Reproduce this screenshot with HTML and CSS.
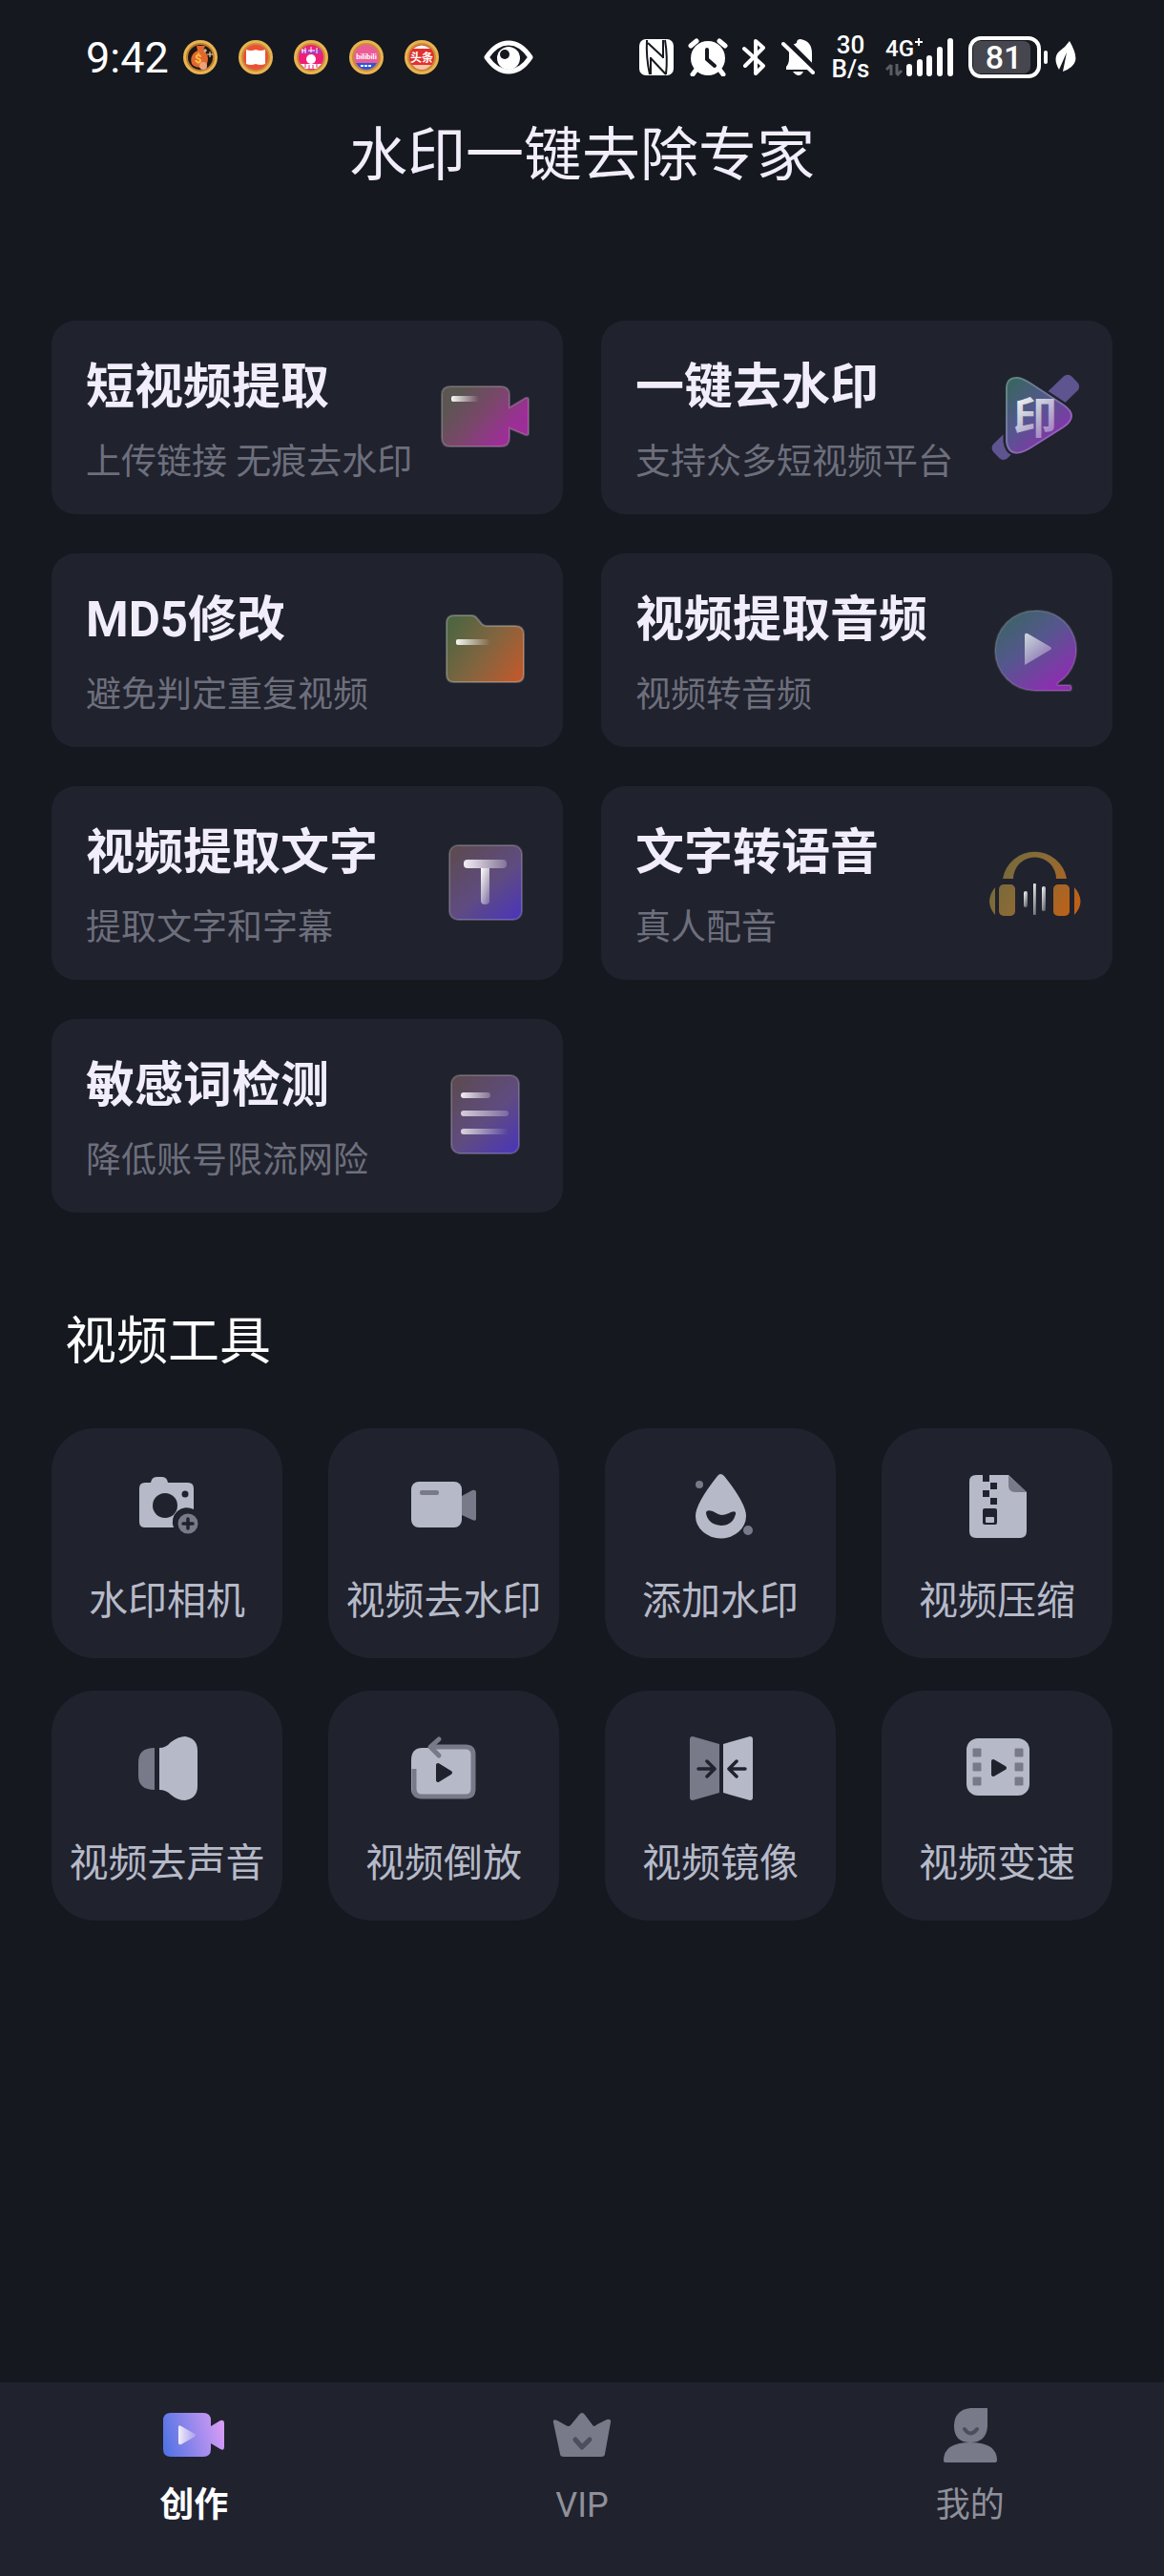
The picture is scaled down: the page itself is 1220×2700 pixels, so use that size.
FILE: index.html
```html
<!DOCTYPE html>
<html lang="zh-CN">
<head>
  <meta charset="UTF-8" />
  <meta name="viewport" content="width=device-width, initial-scale=1.0"/>
  <title>水印一键去除专家</title>
  <link rel="stylesheet" href="styles.css">
</head>
<body>
  <!-- Status Bar -->
  <div class="status-bar">
    <div class="status-left">
      <span class="time">9:42</span>
      <div class="coins">
        <svg viewBox="0 0 36 36">
          <circle cx="18" cy="18" r="18" fill="#e9b44f"/><circle cx="18" cy="18" r="15" fill="#bd7b35"/><circle cx="18" cy="18" r="13" fill="#1c1713"/>
          <path d="M14 6h9l-2 5c5 3 6 8 4 14-4 5-12 5-16 0-2-6 0-11 6-14z" fill="#e2672f"/>
          <text x="12" y="24" font-size="13" font-weight="700" fill="#ffc53d">$</text>
          <path d="M28 12v6M25 15h6M23 9v4M21 11h4" stroke="#ffe2b0" stroke-width="1"/>
          <circle cx="21" cy="27" r="4" fill="#eda27c"/>
        </svg>
        <svg viewBox="0 0 36 36">
          <circle cx="18" cy="18" r="18" fill="#e9b44f"/><circle cx="18" cy="18" r="15" fill="#c98a3c"/><circle cx="18" cy="18" r="13" fill="#ee4f35"/>
          <path d="M8 10q5 2 10 0q5 2 10 0v15q-5 2-10 0q-5 2-10 0z" fill="#fff"/>
        </svg>
        <svg viewBox="0 0 36 36">
          <circle cx="18" cy="18" r="18" fill="#e9b44f"/><circle cx="18" cy="18" r="15" fill="#c98a3c"/><circle cx="18" cy="18" r="13" fill="#ef1f78"/>
          <path d="M8 10h20l1 4H7z" fill="#a13fc4"/>
          <path d="M9 9v5M12 8v6M15 11h7M18 7v6M24 8v6M8 11h5" stroke="#fff" stroke-width="1"/>
          <path d="M7 25h22l-5 5H12z" fill="#fff"/><circle cx="18" cy="20" r="5" fill="#fff"/>
          <path d="M12 25v4M16 26v4M20 26v4M24 25v4" stroke="#ef1f78" stroke-width="1"/>
        </svg>
        <svg viewBox="0 0 36 36">
          <circle cx="18" cy="18" r="18" fill="#e9b44f"/><circle cx="18" cy="18" r="15" fill="#c98a3c"/><circle cx="18" cy="18" r="13" fill="#ec5d98"/>
          <path d="M7 24h22q-4 7-11 7t-11-7z" fill="#2c57d8"/>
          <text x="18" y="20" text-anchor="middle" font-size="8" font-weight="700" fill="#fff">bilibili</text>
          <path d="M12 27h12" stroke="#fff" stroke-width="2" stroke-dasharray="3 1"/>
        </svg>
        <svg viewBox="0 0 36 36">
          <circle cx="18" cy="18" r="18" fill="#e9b44f"/><circle cx="18" cy="18" r="15" fill="#c98a3c"/><circle cx="18" cy="18" r="13" fill="#e2312c"/>
          <path d="M9 9q9-7 18 0z" fill="#fff"/><path d="M8 26h20q-4 5-10 5t-10-5z" fill="#f6c7a4"/>
          <text x="18" y="23" text-anchor="middle" font-size="12" font-weight="700" fill="#fff">头条</text>
        </svg>
      </div>
      <svg class="eye" viewBox="0 0 52 36">
        <path d="M3 18Q13 3 26 3T49 18Q39 33 26 33T3 18z" fill="none" stroke="#fff" stroke-width="5" stroke-linejoin="round"/>
        <circle cx="26" cy="19" r="12" fill="#fff"/><circle cx="22" cy="15" r="5" fill="#16181f"/>
      </svg>
    </div>

    <div class="status-right">
      <svg width="36" height="38" viewBox="0 0 36 38">
        <rect width="36" height="38" rx="7" fill="#fff"/>
        <path d="M8 1q-1 18 3 36M27 1q3 18 1 36M9 4l16 15M12 20l16 17M12 19v18M25 1v19" fill="none" stroke="#16181f" stroke-width="2"/>
      </svg>
      <svg width="42" height="40" viewBox="0 0 42 40">
        <path d="M3 8l6-5M33 3l6 5M8 34l-3 4M34 34l3 4" stroke="#fff" stroke-width="5" stroke-linecap="round"/>
        <circle cx="21" cy="21" r="18" fill="#fff"/>
        <path d="M20 12v10l8 7" fill="none" stroke="#16181f" stroke-width="4" stroke-linecap="round"/>
      </svg>
      <svg width="26" height="40" viewBox="0 0 26 40">
        <path d="M2 11l20 18-8 8V3l8 7L3 29" fill="none" stroke="#fff" stroke-width="4" stroke-linecap="round" stroke-linejoin="round"/>
      </svg>
      <svg width="36" height="40" viewBox="0 0 36 40">
        <path d="M5 33V30q3-3 3-9v-6q1-8 8-10 0-4 4-4 12 2 12 15v10l3 5-5 2z" fill="#fff"/>
        <path d="M12 35h11q-2 4-5 4t-6-4z" fill="#fff"/>
        <path d="M4 2l34 34" stroke="#16181f" stroke-width="6"/>
        <path d="M2 6l31 30" stroke="#fff" stroke-width="4" stroke-linecap="round"/>
      </svg>
      <div class="rate"><span>30</span><span>B/s</span></div>
      <svg width="72" height="58" viewBox="0 -8 72 58">
        <text x="0" y="20" font-size="24" font-weight="500" fill="#fff">4G</text>
        <path d="M35 1v8M31 5h8" stroke="#fff" stroke-width="2"/>
        <path d="M6 29v11M1 34l5-5M12 28v11M17 35l-5 5" stroke="#5c5d64" stroke-width="3" fill="none"/>
        <path d="M25 31v7M36 26v12M46 22v16M57 13v25M68 4v34" stroke="#fff" stroke-width="6" stroke-linecap="round"/>
      </svg>
      <div class="battery">
        <svg width="84" height="44" viewBox="0 0 84 44">
          <rect x="5" y="5" width="60" height="34" rx="7" fill="#46464e"/>
          <rect x="2" y="2" width="72" height="40" rx="11" fill="none" stroke="#fff" stroke-width="4"/>
          <path d="M81 17v10" stroke="#fff" stroke-width="4" stroke-linecap="round"/>
          <text x="37" y="34" text-anchor="middle" font-size="34" font-weight="500" fill="#fff">81</text>
        </svg>
        <svg width="22" height="34" viewBox="0 0 22 34">
          <path d="M15 0q8 14 6 21t-13 11l4-20-8 18Q-3 18 4 11q7-5 11-11z" fill="#fff"/>
        </svg>
      </div>
    </div>
  </div>

  <h1>水印一键去除专家</h1>

  <main>
    <!-- Feature Cards -->
    <section class="cards">
      <a class="card" href="#">
        <div class="card-text">
          <h2>短视频提取</h2>
          <p>上传链接 无痕去水印</p>
        </div>
        <svg viewBox="0 0 96 96">
          <defs>
            <linearGradient id="pink" x1="0" y1="0.1" x2="1" y2="0.7"><stop offset="0.15" stop-color="#5b5651"/><stop offset="0.5" stop-color="#79476a"/><stop offset="0.85" stop-color="#9c2f96"/></linearGradient>
            <linearGradient id="shine" x1="0" x2="1"><stop offset="0" stop-color="#fff" stop-opacity="0.95"/><stop offset="1" stop-color="#fff" stop-opacity="0"/></linearGradient>
          </defs>
          <path d="M11 16h53q9 0 9 9v13l17-10q3-1 3 2v35q0 3-3 2L73 60v10q0 9-9 9H11q-9 0-9-9V25q0-9 9-9z" fill="url(#pink)" stroke="#ffffff" stroke-opacity="0.2" stroke-width="2"/>
          <rect x="12" y="26" width="29" height="6" rx="2" fill="url(#shine)"/>
        </svg>
      </a>
      <a class="card" href="#">
        <div class="card-text">
          <h2>一键去水印</h2>
          <p>支持众多短视频平台</p>
        </div>
        <svg viewBox="0 0 96 96">
          <defs>
            <linearGradient id="violet" x1="0.1" y1="0" x2="0.8" y2="0.9"><stop offset="0" stop-color="#37665e"/><stop offset="0.5" stop-color="#56568f"/><stop offset="1" stop-color="#8c2eb0"/></linearGradient>
            <linearGradient id="fade" x1="0" y1="0" x2="0.7" y2="1"><stop offset="0" stop-color="#fff"/><stop offset="1" stop-color="#fff" stop-opacity="0.3"/></linearGradient>
          </defs>
          <rect x="-9" y="38" width="114" height="21" rx="6" transform="rotate(-44 48 48)" fill="#5d5490"/>
          <path d="M17 17Q18 5 30 6q6 1 15 7l32 21q20 13 0 26L42 82Q20 94 17 74z" fill="url(#violet)" stroke="#20222e" stroke-width="5" paint-order="stroke"/>
          <path d="M18 17Q19 6 30 7q6 1 15 7l32 21q18 12 0 24L42 81Q21 93 18 74z" fill="none" stroke="#ffffff" stroke-opacity="0.2" stroke-width="2"/>
          <text x="48" y="65" text-anchor="middle" font-size="46" font-weight="700" fill="url(#fade)">印</text>
        </svg>
      </a>
      <a class="card" href="#">
        <div class="card-text">
          <h2>MD5修改</h2>
          <p>避免判定重复视频</p>
        </div>
        <svg viewBox="0 0 96 96">
          <defs>
            <linearGradient id="orange" x1="0" y1="0.2" x2="1" y2="0.8"><stop offset="0" stop-color="#4d6541"/><stop offset="0.5" stop-color="#806540"/><stop offset="1" stop-color="#bd5a2d"/></linearGradient>
          </defs>
          <path d="M15 12h18q4 0 6 3l5 6q2 2 5 2h30q9 0 9 9v42q0 8-8 8H15q-8 0-8-8V20q0-8 8-8z" fill="url(#orange)" stroke="#ffffff" stroke-opacity="0.25" stroke-width="2"/>
          <rect x="17" y="37" width="36" height="6" rx="2" fill="url(#shine)"/>
        </svg>
      </a>
      <a class="card" href="#">
        <div class="card-text">
          <h2>视频提取音频</h2>
          <p>视频转音频</p>
        </div>
        <svg viewBox="0 0 96 96">
          <path d="M48 7a41 41 0 0 1 25 75q-3 3-1 3h12q2 0 2 3t-2 3H48A42 42 0 0 1 48 7z" fill="url(#violet)" stroke="#ffffff" stroke-opacity="0.15" stroke-width="2"/>
          <path d="M37 33q0-3 3-2l24 14q2 2 0 3L37 64z" fill="url(#fade)" opacity="0.75"/>
        </svg>
      </a>
      <a class="card" href="#">
        <div class="card-text">
          <h2>视频提取文字</h2>
          <p>提取文字和字幕</p>
        </div>
        <svg viewBox="0 0 96 96">
          <defs>
            <linearGradient id="indigo" x1="0.1" y1="0" x2="0.9" y2="1"><stop offset="0" stop-color="#5c4a51"/><stop offset="0.55" stop-color="#5f4c80"/><stop offset="1" stop-color="#4c36b6"/></linearGradient>
            <linearGradient id="bar" x1="0" x2="1"><stop offset="0" stop-color="#f4eef8"/><stop offset="1" stop-color="#f4eef8" stop-opacity="0.25"/></linearGradient>
          </defs>
          <rect x="10" y="9" width="76" height="78" rx="9" fill="url(#indigo)" stroke="#ffffff" stroke-opacity="0.2" stroke-width="2"/>
          <rect x="25" y="24" width="45" height="9" rx="4" fill="url(#bar)"/>
          <path d="M43 33h9v34q0 4-4.500 4t-4.500-4z" fill="url(#fade)"/>
        </svg>
      </a>
      <a class="card" href="#">
        <div class="card-text">
          <h2>文字转语音</h2>
          <p>真人配音</p>
        </div>
        <svg viewBox="0 0 96 96">
          <defs>
            <linearGradient id="amber" gradientUnits="userSpaceOnUse" x1="10" y1="20" x2="90" y2="70"><stop offset="0" stop-color="#716a3c"/><stop offset="0.5" stop-color="#8d6a35"/><stop offset="1" stop-color="#bd6118"/></linearGradient>
          </defs>
          <path d="M14 44a34 34 0 0 1 67 0H70a22 22 0 0 0-45 0z" fill="url(#amber)"/>
          <rect x="10" y="50" width="17" height="33" rx="5" fill="url(#amber)"/>
          <rect x="67" y="50" width="17" height="33" rx="5" fill="url(#amber)"/>
          <path d="M6 53v29q-12-14 0-29zM89 53v29q13-14 0-29z" fill="url(#amber)"/>
          <rect x="36" y="57" width="4" height="17" rx="2" fill="url(#fade)"/>
          <rect x="46" y="49" width="3" height="33" rx="1" fill="url(#fade)"/>
          <rect x="55" y="52" width="4" height="26" rx="2" fill="url(#fade)"/>
        </svg>
      </a>
      <a class="card" href="#">
        <div class="card-text">
          <h2>敏感词检测</h2>
          <p>降低账号限流网险</p>
        </div>
        <svg viewBox="0 0 96 96">
          <rect x="12" y="6" width="71" height="82" rx="9" fill="url(#indigo)" stroke="#ffffff" stroke-opacity="0.2" stroke-width="2"/>
          <rect x="22" y="24" width="31" height="6" rx="3" fill="url(#bar)"/>
          <rect x="22" y="43" width="50" height="6" rx="3" fill="url(#bar)" opacity="0.8"/>
          <rect x="22" y="62" width="50" height="6" rx="3" fill="url(#shine)" opacity="0.8"/>
        </svg>
      </a>
    </section>

    <!-- Video Tools -->
    <h3>视频工具</h3>
    <section class="tools">
      <a class="tool" href="#">
        <svg viewBox="0 0 72 72">
          <path d="M13 12h6q1-6 6-6h6q5 0 6 6h21q6 0 6 6v22a15 15 0 0 0-21 19H13q-6 0-6-6V18q0-6 6-6z" fill="#b6bac8"/>
          <circle cx="34" cy="36" r="13" fill="#20222e"/><circle cx="55" cy="24" r="3.500" fill="#20222e"/>
          <circle cx="58" cy="55" r="10.500" fill="#787a89"/>
          <path d="M58 50v10M53 55h10" stroke="#20222e" stroke-width="3.500" stroke-linecap="round"/>
        </svg>
        <span>水印相机</span>
      </a>
      <a class="tool" href="#">
        <svg viewBox="0 0 72 72">
          <path d="M55 26l11-6q4-1 4 2v28q0 3-4 1l-11-5z" fill="#787a89"/>
          <rect x="2" y="11" width="53" height="48" rx="8" fill="#b6bac8"/>
          <rect x="11" y="20" width="20" height="5" rx="2" fill="#787a89"/>
        </svg>
        <span>视频去水印</span>
      </a>
      <a class="tool" href="#">
        <svg viewBox="0 0 72 72">
          <path d="M33 5q3-4 7 0 23 29 23 42a26 23 0 0 1-53 0Q10 34 33 5z" fill="#b6bac8"/>
          <path d="M21 44q0-4 7-2 5 3 9 4 5 0 10-3 6-2 5 2-3 12-15 12-14-1-16-13z" fill="#20222e"/>
          <circle cx="14" cy="14" r="4" fill="#787a89"/><circle cx="65" cy="62" r="5" fill="#787a89"/>
        </svg>
        <span>添加水印</span>
      </a>
      <a class="tool" href="#">
        <svg viewBox="0 0 72 72">
          <path d="M14 4h34l19 18v41q0 7-7 7H14q-7 0-7-7V11q0-7 7-7z" fill="#b6bac8"/>
          <path d="M48 4l19 18H55q-7 0-7-7z" fill="#787a89"/>
          <path d="M21 4h7v7h-7zM29 12h7v7h-7zM21 20h7v7h-7zM29 28h7v7h-7z" fill="#20222e"/>
          <rect x="21" y="39" width="15" height="17" rx="2" fill="#20222e"/>
          <rect x="24" y="48" width="9" height="6" rx="1" fill="#b6bac8"/>
        </svg>
        <span>视频压缩</span>
      </a>
      <a class="tool" href="#">
        <svg viewBox="0 0 72 72">
          <path d="M23 15v44q-17 0-17-15V30q0-15 17-15z" fill="#787a89"/>
          <path d="M28 15q7 0 12-6 8-6 15-6 13 2 13 15v37q0 13-13 15-8 0-15-6-5-5-12-5z" fill="#b6bac8"/>
        </svg>
        <span>视频去声音</span>
      </a>
      <a class="tool" href="#">
        <svg viewBox="0 0 72 72">
          <path d="M14 15h46q8 0 8 8v35q0 8-8 8H10q-8 0-8-8V28q0-13 12-13z" fill="#b6bac8"/>
          <path d="M22 14h37q8 0 8 8v36q0 8-8 8H13q-8 0-8-8V37" fill="none" stroke="#787a89" stroke-width="5"/>
          <path d="M31 6l-9 8 9 9" fill="none" stroke="#787a89" stroke-width="5" stroke-linecap="round" stroke-linejoin="round"/>
          <path d="M30 33l13 8-13 8z" fill="#20222e" stroke="#20222e" stroke-width="4" stroke-linejoin="round"/>
        </svg>
        <span>视频倒放</span>
      </a>
      <a class="tool" href="#">
        <svg viewBox="0 0 72 72">
          <path d="M7 3l28 8v51L7 70q-3 0-3-3V6q0-3 3-3z" fill="#787a89"/>
          <path d="M67 3l-28 8v51l28 8q3 0 3-3V6q0-3-3-3z" fill="#b6bac8"/>
          <path d="M13 37h17M22 29l8 8-8 8M62 37H45M53 29l-8 8 8 8" fill="none" stroke="#20222e" stroke-width="3.500" stroke-linecap="round" stroke-linejoin="round"/>
        </svg>
        <span>视频镜像</span>
      </a>
      <a class="tool" href="#">
        <svg viewBox="0 0 72 72">
          <rect x="4" y="5" width="66" height="60" rx="12" fill="#b6bac8"/>
          <path d="M11 16h8v8h-8zM11 31h8v8h-8zM11 46h8v8h-8zM55 16h8v8h-8zM55 31h8v8h-8zM55 46h8v8h-8z" fill="#787a89" stroke="#787a89" stroke-linejoin="round"/>
          <path d="M32 29l12 7-12 7z" fill="#20222e" stroke="#20222e" stroke-width="4" stroke-linejoin="round"/>
        </svg>
        <span>视频变速</span>
      </a>
    </section>
  </main>

  <!-- Bottom Tabs -->
  <nav>
    <a class="tab active" href="#">
      <svg viewBox="0 0 72 72">
        <defs>
          <linearGradient id="tab" x1="0" y1="0.6" x2="1" y2="0.4"><stop offset="0" stop-color="#5474e4"/><stop offset="1" stop-color="#d79cf5"/></linearGradient>
        </defs>
        <path d="M12 13h34q8 0 8 8v6l10-6q4-1 4 3v25q0 4-4 2l-10-6v6q0 8-8 8H12q-8 0-8-8V21q0-8 8-8z" fill="url(#tab)"/>
        <path d="M20 28q0-3 3-1l14 8q2 1 0 3l-14 8q-3 1-3-2z" fill="url(#bar)"/>
      </svg>
      <span>创作</span>
    </a>
    <a class="tab" href="#">
      <svg viewBox="0 0 72 72">
        <path d="M33 15q3-4 6 0l9 12q2 0 4-2l10-5q5-1 4 3l-6 33q0 3-4 3H17q-4 0-4-3L6 23q-1-4 4-2l9 5q3 2 5 0z" fill="#787a89"/>
        <path d="M29 41l7 8 8-8" fill="none" stroke="#4c4e5c" stroke-width="5" stroke-linecap="round" stroke-linejoin="round"/>
      </svg>
      <span>VIP</span>
    </a>
    <a class="tab" href="#">
      <svg viewBox="0 0 72 72">
        <path d="M36 8h18v19q-1 17-18 17T19 27Q19 10 36 8z" fill="#787a89"/>
        <path d="M8 63q0-19 28-19t28 19q0 2-3 2H11q-3 0-3-2z" fill="#787a89"/>
        <path d="M30 30q6 9 13 0" fill="none" stroke="#4c4e5c" stroke-width="4" stroke-linecap="round"/>
      </svg>
      <span>我的</span>
    </a>
  </nav>
</body>
</html>
```
FILE: styles.css
```css
/* Global page styling */
* {
  box-sizing: border-box;
}

body {
  margin: 0;
  min-height: 100vh;
  display: flex;
  flex-direction: column;
  background: #15181f;
  color: #f1edfb;
  font-family: Roboto, 'Noto Sans CJK SC', sans-serif;
}

h1, h2, h3, p {
  margin: 0;
}

a {
  color: inherit;
  text-decoration: none;
}

svg {
  display: block;
  flex-shrink: 0;
}

/* Status bar */
.status-bar {
  display: flex;
  justify-content: space-between;
  align-items: center;
  height: 120px;
  padding: 0 92px 0 90px;
  color: #fff;
}

.status-left,
.status-right,
.coins,
.battery {
  display: flex;
  align-items: center;
}

.time {
  font-size: 45px;
  margin-right: 15px;
}

.coins {
  gap: 22px;
}

.coins svg {
  width: 36px;
  height: 36px;
}

.eye {
  width: 52px;
  height: 36px;
  margin-left: 47px;
}

.status-right {
  gap: 15px;
}

.rate {
  display: flex;
  flex-direction: column;
  align-items: center;
  width: 43px;
  font-size: 26px;
  font-weight: 500;
  line-height: 25px;
}

.battery {
  gap: 7px;
}

/* Page title */
h1 {
  font-size: 61px;
  font-weight: 400;
  line-height: 86px;
  text-align: center;
}

main {
  padding: 130px 54px 40px;
}

/* Feature cards */
.cards {
  display: grid;
  grid-template-columns: 1fr 1fr;
  gap: 41px 40px;
}

.card {
  display: flex;
  justify-content: space-between;
  align-items: center;
  padding: 32px 33px 29px 36px;
  border-radius: 25px;
  background: #20222e;
}

.card svg {
  width: 96px;
  height: 96px;
  margin-bottom: 4px;
}

.card h2 {
  font-size: 51px;
  font-weight: 700;
  line-height: 76px;
}

.card p {
  margin-top: 16px;
  color: #6d6f7c;
  font-size: 37px;
  line-height: 50px;
  white-space: nowrap;
}

/* Tool tiles */
h3 {
  margin: 96px 14px 50px;
  color: #fff;
  font-size: 54px;
  font-weight: 400;
  line-height: 80px;
}

.tools {
  display: grid;
  grid-template-columns: repeat(4, 1fr);
  gap: 34px 48px;
}

.tool {
  display: flex;
  flex-direction: column;
  align-items: center;
  gap: 39px;
  padding: 45px 0 35px;
  border-radius: 45px;
  background: #20222e;
  color: #b6bac8;
  font-size: 41px;
  line-height: 50px;
  white-space: nowrap;
}

.tool svg,
.tab svg {
  width: 72px;
  height: 72px;
}

/* Bottom tabs */
nav {
  display: flex;
  margin-top: auto;
  padding: 19px 0 49px;
  background: #20222e;
}

.tab {
  flex: 1;
  display: flex;
  flex-direction: column;
  align-items: center;
  gap: 13px;
  color: #8f9099;
  font-size: 36px;
  line-height: 50px;
}

.active {
  color: #fff;
  font-weight: 700;
}
```
